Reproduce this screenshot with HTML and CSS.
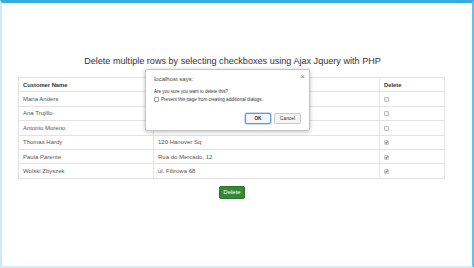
FILE: index.html
```html
<!DOCTYPE html>
<html>
<head>
<meta charset="utf-8">
<link rel="stylesheet" href="styles.css">
</head>
<body>
<div class="frame">
  <div class="page">
    <h3 class="title">Delete multiple rows by selecting checkboxes using Ajax Jquery with PHP</h3>
    <table class="grid">
      <colgroup><col class="c1"><col class="c2"><col class="c3"></colgroup>
      <thead>
        <tr><th>Customer Name</th><th></th><th>Delete</th></tr>
      </thead>
      <tbody>
        <tr><td>Maria Anders</td><td></td><td><span class="cb"></span></td></tr>
        <tr><td>Ana Trujillo</td><td></td><td><span class="cb"></span></td></tr>
        <tr><td>Antonio Moreno</td><td></td><td><span class="cb"></span></td></tr>
        <tr><td>Thomas Hardy</td><td>120 Hanover Sq</td><td><span class="cb on"><svg viewBox="0 0 10 10" width="5" height="5"><path d="M1.2 5.2 L4 8 L9 1.5" fill="none" stroke="#111" stroke-width="2.4"/></svg></span></td></tr>
        <tr><td>Paula Parente</td><td>Rua do Mercado, 12</td><td><span class="cb on"><svg viewBox="0 0 10 10" width="5" height="5"><path d="M1.2 5.2 L4 8 L9 1.5" fill="none" stroke="#111" stroke-width="2.4"/></svg></span></td></tr>
        <tr><td>Wolski Zbyszek</td><td>ul. Filtrowa 68</td><td><span class="cb on"><svg viewBox="0 0 10 10" width="5" height="5"><path d="M1.2 5.2 L4 8 L9 1.5" fill="none" stroke="#111" stroke-width="2.4"/></svg></span></td></tr>
      </tbody>
    </table>
    <div class="actions"><button class="btn-del">Delete</button></div>
  </div>
  <div class="dialog">
    <div class="dlg-close">×</div>
    <div class="dlg-title">localhost says:</div>
    <div class="dlg-msg">Are you sure you want to delete this?</div>
    <label class="dlg-check"><span class="cb small"></span>Prevent this page from creating additional dialogs.</label>
    <div class="dlg-buttons">
      <button class="dbtn ok">OK</button>
      <button class="dbtn">Cancel</button>
    </div>
  </div>
</div>
</body>
</html>
```

FILE: styles.css
```css
* { box-sizing: border-box; }
html, body { margin: 0; padding: 0; }
body {
  width: 474px;
  height: 268px;
  overflow: hidden;
  font-family: "Liberation Sans", Arial, sans-serif;
  background: #fff;
}
.frame {
  position: relative;
  width: 474px;
  height: 268px;
  border-top: 3px solid #35ade2;
  border-right: 2px solid #62c3ea;
  border-left: 2px solid #cdeaf6;
  border-bottom: 2px solid #d4eef8;
  background: #fff;
}
.page {
  padding: 0 29px 0 16px;
}
.title {
  margin: 0;
  padding-top: 51px;
  padding-left: 4px;
  height: 74px;
  font-size: 9.1px;
  line-height: 14px;
  font-weight: normal;
  color: #333;
  text-align: center;
}
.grid {
  width: 426px;
  border-collapse: collapse;
  table-layout: fixed;
  font-size: 6px;
  color: #555;
}
.c1 { width: 135px; }
.c2 { width: 226px; }
.c3 { width: 65px; }
.grid th, .grid td {
  border: 1px solid #e2e2e2;
  height: 14.4px;
  padding: 0 4px;
  text-align: left;
  vertical-align: middle;
  line-height: 8px;
  white-space: nowrap;
}
.grid th {
  font-weight: bold;
  color: #333;
  font-size: 5.8px;
}
.cb {
  display: inline-flex;
  align-items: center;
  justify-content: center;
  width: 5px;
  height: 5px;
  border: 1px solid #bdbdbd;
  border-radius: 1px;
  background: #f2f2f2;
  vertical-align: middle;
}
.cb.on { border-color: #c8c8c8; background: #f2f2f2; }
.cb svg { display: block; }
.actions {
  width: 426px;
  padding-top: 7px;
  display: flex;
  justify-content: center;
}
.btn-del {
  font-family: "Liberation Sans", Arial, sans-serif;
  font-size: 6px;
  color: #fff;
  background: #34883a;
  border: 1px solid #2a7330;
  border-radius: 2px;
  width: 26px;
  height: 13px;
  padding: 0;
  margin-left: 2px;
}
.dialog {
  position: absolute;
  left: 143px;
  top: 66px;
  width: 165px;
  height: 62px;
  background: #fff;
  border: 1px solid #c4c4c4;
  border-radius: 2px;
  box-shadow: 0 1px 4px rgba(0,0,0,0.25);
  padding: 5px 7px 0 8px;
  color: #333;
}
.dlg-close {
  position: absolute;
  right: 4px;
  top: 2px;
  font-size: 8px;
  color: #777;
}
.dlg-title {
  font-size: 6px;
  line-height: 9px;
  color: #444;
}
.dlg-msg {
  font-size: 4.5px;
  line-height: 7px;
  margin-top: 3.5px;
  color: #333;
}
.dlg-check {
  display: flex;
  align-items: center;
  gap: 2px;
  font-size: 4.6px;
  line-height: 7px;
  margin-top: 1.5px;
  color: #333;
}
.cb.small { width: 5px; height: 5px; background: #fff; border-color: #999; }
.dlg-buttons {
  display: flex;
  justify-content: flex-end;
  gap: 3px;
  margin-top: 9.5px;
  padding-right: 1px;
}
.dbtn {
  font-family: "Liberation Sans", Arial, sans-serif;
  font-size: 4.8px;
  width: 27px;
  height: 11px;
  padding: 0;
  background: #f6f6f6;
  border: 1px solid #c8c8c8;
  border-radius: 2px;
  color: #333;
}
.dbtn.ok {
  border-color: #5a9ae6;
  font-weight: bold;
  box-shadow: 0 0 0 0.5px #8fb8ee;
  width: 26px;
}
```
